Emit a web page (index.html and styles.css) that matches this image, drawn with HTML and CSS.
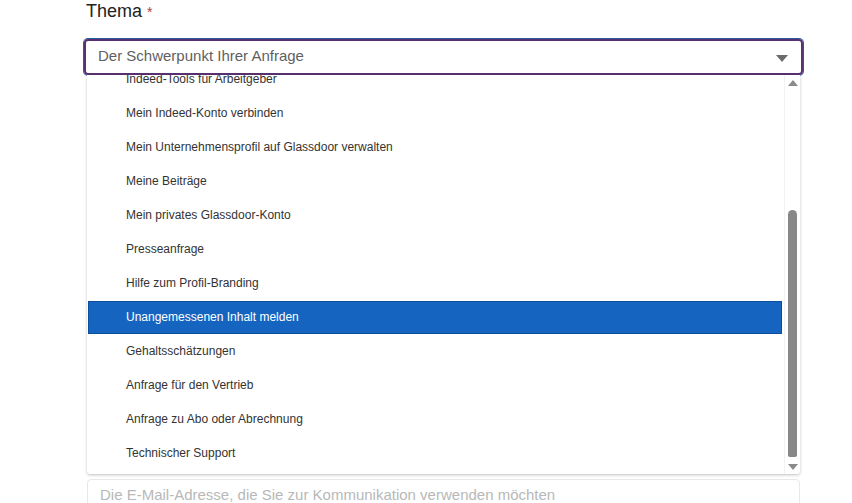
FILE: index.html
```html
<!DOCTYPE html>
<html lang="de">
<head>
    <meta charset="UTF-8">
    <title>Kontakt</title>
    <link rel="stylesheet" href="styles.css">
</head>
<body>
    <div class="form">
        <label class="field-label">Thema <span class="required">*</span></label>

        <!-- Select with open list -->
        <div class="select">
            <span class="select-value">Der Schwerpunkt Ihrer Anfrage</span>
            <span class="caret"></span>
        </div>
        <div class="dropdown">
            <ul class="options">
                <li class="option">Indeed-Tools für Arbeitgeber</li>
                <li class="option">Mein Indeed-Konto verbinden</li>
                <li class="option">Mein Unternehmensprofil auf Glassdoor verwalten</li>
                <li class="option">Meine Beiträge</li>
                <li class="option">Mein privates Glassdoor-Konto</li>
                <li class="option">Presseanfrage</li>
                <li class="option">Hilfe zum Profil-Branding</li>
                <li class="option selected">Unangemessenen Inhalt melden</li>
                <li class="option">Gehaltsschätzungen</li>
                <li class="option">Anfrage für den Vertrieb</li>
                <li class="option">Anfrage zu Abo oder Abrechnung</li>
                <li class="option">Technischer Support</li>
            </ul>
            <div class="scrollbar">
                <span class="arrow-up"></span>
                <span class="thumb"></span>
                <span class="arrow-down"></span>
            </div>
        </div>

        <input type="text" class="text-input" placeholder="Die E-Mail-Adresse, die Sie zur Kommunikation verwenden möchten">
    </div>
</body>
</html>
```

FILE: styles.css
```css
* {
    margin: 0;
    padding: 0;
    box-sizing: border-box;
}

body {
    background: #fff;
    font-family: "Liberation Sans", Arial, sans-serif;
    color: #222;
}

.form {
    width: 719px;
    margin-left: 84px;
}

.field-label {
    display: block;
    font-size: 18px;
    line-height: 22px;
    color: #222;
    padding-left: 2px;
}

.required {
    color: #b0413e;
    font-size: 14px;
}

.select {
    display: flex;
    align-items: center;
    height: 36px;
    margin-top: 16px;
    padding: 0 13px 0 12px;
    border: 2px solid #5a3170;
    border-radius: 4px;
    box-shadow: 0 0 0 1px #2a5ca3;
}

.select-value {
    flex: 1;
    font-size: 15px;
    color: #5f5f5f;
    margin-bottom: 4px;
}

.caret {
    width: 0;
    height: 0;
    border-left: 6px solid transparent;
    border-right: 6px solid transparent;
    border-top: 7px solid #6b6b6b;
    margin-top: 3px;
}

.dropdown {
    display: flex;
    height: 399px;
    margin: 0 3px;
    padding-left: 1px;
    background: #fff;
    box-shadow: 0 1px 3px rgba(0, 0, 0, 0.25);
    border-radius: 0 0 3px 3px;
}

.options {
    flex: 1;
    list-style: none;
    overflow: hidden;
}

.option {
    height: 34px;
    line-height: 33px;
    padding-left: 38px;
    font-size: 12px;
    color: #333;
}

.option:first-child {
    margin-top: -12px;
}

.option.selected {
    height: 33px;
    margin-bottom: 1px;
    background: #1565c0;
    border: 1px solid #0e4f9b;
    line-height: 31px;
    padding-left: 37px;
    color: #fff;
}

.scrollbar {
    width: 16px;
    display: flex;
    flex-direction: column;
    align-items: center;
    padding: 5px 0 4px 0;
    border-left: 1px solid #f2f2f2;
    margin-left: 2px;
}

.arrow-up {
    width: 0;
    height: 0;
    border-left: 5px solid transparent;
    border-right: 5px solid transparent;
    border-bottom: 6px solid #8a8a8a;
}

.thumb {
    width: 9px;
    height: 247px;
    margin-top: auto;
    background: #888;
    border-radius: 5px 5px 2px 2px;
}

.arrow-down {
    width: 0;
    height: 0;
    margin-top: 7px;
    border-left: 5px solid transparent;
    border-right: 5px solid transparent;
    border-top: 6px solid #8a8a8a;
}

.text-input {
    display: block;
    width: 713px;
    height: 34px;
    margin: 5px 3px 0;
    padding: 0 12px 3px;
    border: 1px solid #e8e8e8;
    border-radius: 4px;
    font-family: "Liberation Sans", Arial, sans-serif;
    font-size: 15px;
}

.text-input::placeholder {
    color: #b8b8b8;
}
```
